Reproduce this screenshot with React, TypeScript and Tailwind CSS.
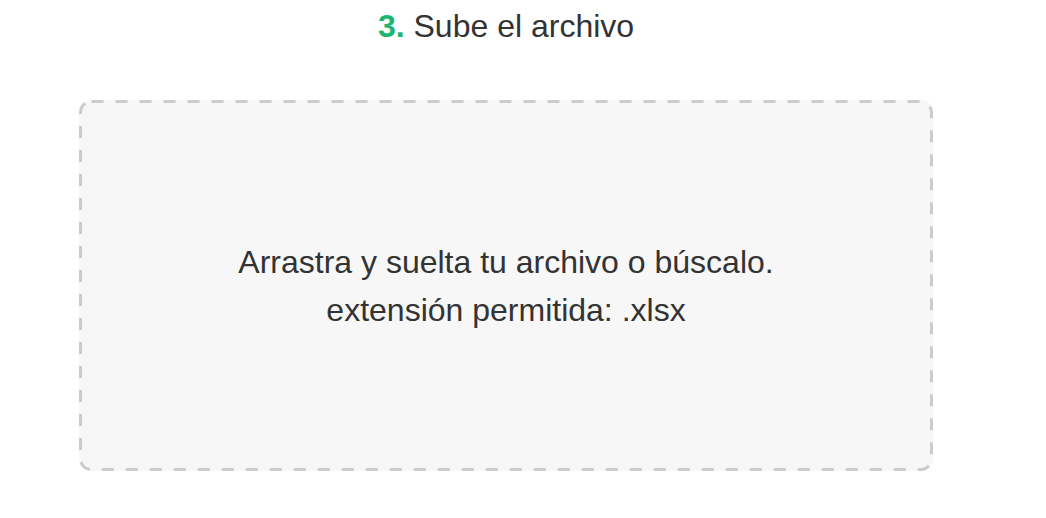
export default function App() {
  return (
    <div
      className="min-h-[518px] w-[1046px] bg-white text-[#333333]"
      style={{ fontFamily: '"Liberation Sans", Arial, sans-serif' }}
    >
      <div className="ml-[79px] flex w-[854px] flex-col items-center pt-[8px]">
        <h2 className="text-[32px] leading-[36px]">
          <span className="font-bold text-[#1db56f]">3.</span> Sube el archivo
        </h2>
        <div className="relative mt-[56px] flex h-[371px] w-full flex-col items-center justify-center rounded-[12px] bg-[#f7f7f7] text-center text-[32px] leading-[48px]">
          {/* dashed drop-zone outline */}
          <svg
            className="pointer-events-none absolute inset-0"
            width="854"
            height="371"
            viewBox="0 0 854 371"
          >
            <rect
              x="1.5"
              y="1.5"
              width="851"
              height="368"
              rx="11"
              fill="none"
              stroke="#cccccc"
              strokeWidth="3"
              strokeDasharray="12 12"
            />
          </svg>
          <p>Arrastra y suelta tu archivo o búscalo.</p>
          <p>extensión permitida: .xlsx</p>
        </div>
      </div>
    </div>
  );
}
